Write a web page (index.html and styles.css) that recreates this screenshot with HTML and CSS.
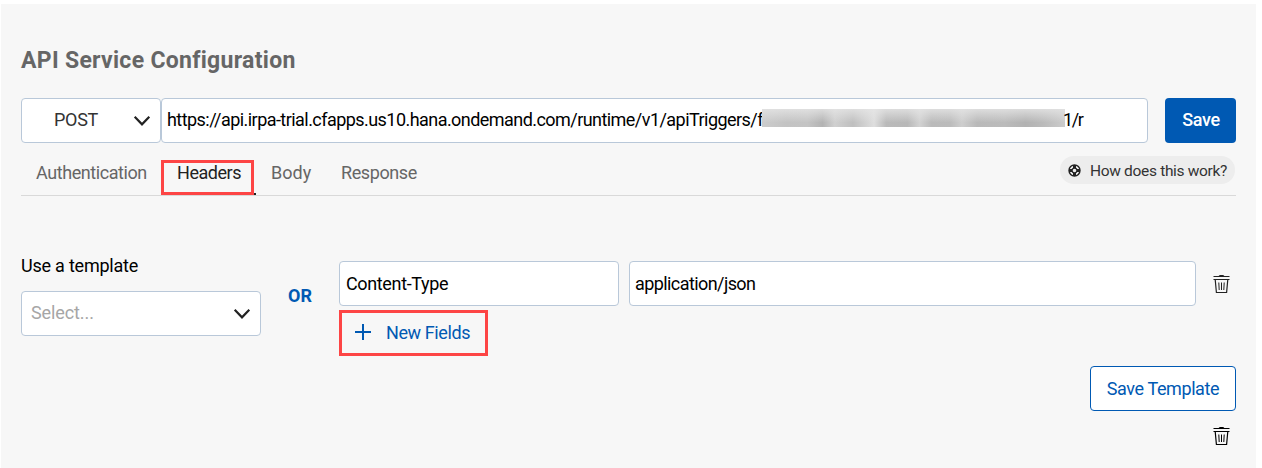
FILE: index.html
```html
<!DOCTYPE html>
<html lang="en">
<head>
<meta charset="utf-8">
<title>API Service Configuration</title>
<link rel="stylesheet" href="styles.css">
</head>
<body>
<svg class="sprite" width="0" height="0" aria-hidden="true">
  <symbol id="trash" viewBox="0 0 17 19">
    <path d="M.5 1.5h16M.5 4.5h16M6 1q2.5-1 5 0M2.2 4.5l1.2 13h10.2l1.2-13" fill="none" stroke="currentColor" stroke-width="1.2"/><path d="M5.8 7.5l.4 7.5M8.5 7.5v7.5M11.2 7.5l-.4 7.5" fill="none" stroke="currentColor" stroke-width="1"/>
  </symbol>
  <symbol id="chevron" viewBox="0 0 18 12">
    <path d="M1.7 1.8 9 9.3l7.3-7.5" fill="none" stroke="currentColor" stroke-width="2.2"/>
  </symbol>
</svg>
<main class="panel">
  <h1 class="title"><span class="t-title">API Service Configuration</span></h1>
  <div class="request">
    <div class="box method"><span class="t-post">POST</span><svg class="chevron"><use href="#chevron"/></svg></div>
    <div class="box url"><span class="t-url">https://api.irpa-trial.cfapps.us10.hana.ondemand.com/runtime/v1/apiTriggers/f</span><span class="redacted"></span><span class="t-tail">1/r</span></div>
    <button class="save"><span class="t-save">Save</span></button>
  </div>
  <nav class="tabs">
    <span class="tab auth"><span class="t-auth">Authentication</span></span>
    <span class="tab active"><span class="t-headers">Headers</span><span class="mark"></span></span>
    <span class="tab body"><span class="t-body">Body</span></span>
    <span class="tab response"><span class="t-response">Response</span></span>
    <span class="help">
      <svg class="help-icon" viewBox="0 0 13 13"><circle cx="6.5" cy="6.5" r="5.5" fill="none" stroke="#222" stroke-width="1.4"/><circle cx="6.5" cy="6.5" r="2.4" fill="none" stroke="#222" stroke-width="1.2"/><path d="M6.5 1v3M6.5 9v3M1 6.5h3M9 6.5h3" stroke="#222" stroke-width="3"/></svg>
      <span class="t-help">How does this work?</span>
    </span>
  </nav>
  <section class="headers">
    <div class="template">
      <div class="label"><span class="t-label">Use a template</span></div>
      <div class="box select"><span class="t-select">Select...</span><svg class="chevron"><use href="#chevron"/></svg></div>
    </div>
    <div class="or"><span class="t-or">OR</span></div>
    <div class="fields">
      <div class="field-row">
        <div class="box key"><span class="t-key">Content-Type</span></div>
        <div class="box value"><span class="t-value">application/json</span></div>
        <svg class="trash soft"><use href="#trash"/></svg>
      </div>
      <div class="new"><svg class="plus" viewBox="0 0 16 16"><path d="M8 0v16M0 8h16" stroke="currentColor" stroke-width="2"/></svg><span class="t-new">New Fields</span></div>
    </div>
  </section>
  <div class="footer">
    <button class="save-template"><span class="t-template">Save Template</span></button>
    <svg class="trash"><use href="#trash"/></svg>
  </div>
</main>
</body>
</html>
```
FILE: styles.css
```css
* { box-sizing: border-box; }
body { margin: 0; background: #fff; font: 18px/24px Roboto, "Liberation Sans", sans-serif; color: #000; overflow: hidden; }
button { font: inherit; padding: 0; }
span { white-space: nowrap; }
svg { flex: none; display: block; }
.sprite { position: absolute; }
.panel { margin: 4px 6px 0 1px; height: 464px; padding: 42px 20px 0; background: #f7f7f7; }
.title { margin: 0; height: 52px; font-size: 23px; line-height: 30px; font-weight: 700; color: #666; letter-spacing: .3px; }
.box { height: 45px; background: #fff; border: 1px solid #b9c8d9; border-radius: 4px; display: flex; align-items: center; }
.request { display: flex; }
.method { width: 140px; padding: 0 9px 0 32px; justify-content: space-between; color: #333; }
.t-post { letter-spacing: -.3px; padding-bottom: 2px; }
.chevron { width: 18px; height: 12px; color: #222; }
.url { width: 987px; padding-left: 5px; }
.t-url { width: 595px; flex: none; letter-spacing: -.55px; padding-bottom: 2px; }
.redacted { width: 303px; height: 18px; margin-top: -5px; flex: none; background: linear-gradient(180deg, #e6e6e6cc, #ddd0 75%), linear-gradient(90deg, #ccc, #c3c3c3 8%, #c4c4c4 15%, #b3b3b3 20%, #d0d0d0 24%, #bfbfbf 30%, #dedede 37%, #bababa 41%, #b8b8b8 48%, #d2d2d2 52%, #bababa 56%, #bbb 62%, #cecece 66%, #b9b9b9 71%, #bbb 80%, #b2b2b2 87%, #bbb 93%, #ccc); }
.t-tail { letter-spacing: -1.4px; margin-left: -2px; padding-bottom: 2px; }
.save { margin-left: 17px; width: 71px; height: 45px; border: 0; border-radius: 4px; background: #0059b3; color: #fff; font-weight: 500; }
.t-save { letter-spacing: -.3px; padding-left: 1px; position: relative; top: -1px; }
.tabs { display: flex; height: 53px; border-bottom: 1px solid #d9d9d9; color: #666; }
.tab { padding-top: 18px; }
.auth { width: 140px; padding-left: 15px; letter-spacing: -.43px; }
.active { position: relative; width: 95px; padding-left: 16px; color: #222; border-bottom: 2px solid #222; height: 52px; letter-spacing: -.45px; }
.mark { position: absolute; left: 0; top: 17px; width: 93px; height: 35px; border: 3px solid #fd4545; }
.body { width: 85px; padding-left: 15px; }
.response { padding-left: 0; letter-spacing: -.4px; }
.help { margin: 13px 1px 0 auto; width: 175px; height: 28px; border-radius: 14px; background: #ededed; color: #333; display: flex; align-items: center; padding-left: 8px; font-size: 15.5px; letter-spacing: -.32px; }
.t-help { padding-top: 2px; }
.help-icon { width: 13px; height: 13px; margin-right: 9px; }
.headers { display: flex; padding-top: 58px; height: 170px; }
.template { width: 240px; }
.label { height: 37px; letter-spacing: -.22px; }
.select { padding: 0 9px; justify-content: space-between; color: #a6a6a6; }
.t-select { padding-bottom: 2px; letter-spacing: -.1px; }
.or { width: 78px; padding: 30px 0 0 27px; color: #0059b3; font-weight: 700; }
.fields { padding-top: 7px; flex: 1; }
.field-row { display: flex; align-items: center; }
.key { width: 280px; margin-right: 10px; padding-left: 6px; letter-spacing: -.36px; }
.value { width: 567px; margin-right: 17px; padding-left: 5px; letter-spacing: -.58px; }
.trash { width: 17px; height: 19px; color: #000; }
.soft { color: #222; margin-top: 2px; }
.new { margin-top: 4px; width: 149px; height: 46px; border: 3px solid #fd4545; display: flex; align-items: center; padding-left: 13px; color: #0059b3; letter-spacing: -.4px; }
.plus { width: 16px; height: 16px; margin: -2px 15px 0 0; }
.footer { display: flex; flex-direction: column; align-items: flex-end; }
.save-template { width: 146px; height: 45px; background: #fff; border: 1px solid #0059b3; border-radius: 4px; color: #0059b3; letter-spacing: -.4px; }
.footer .trash { margin: 16px 6px 0 0; }
```
